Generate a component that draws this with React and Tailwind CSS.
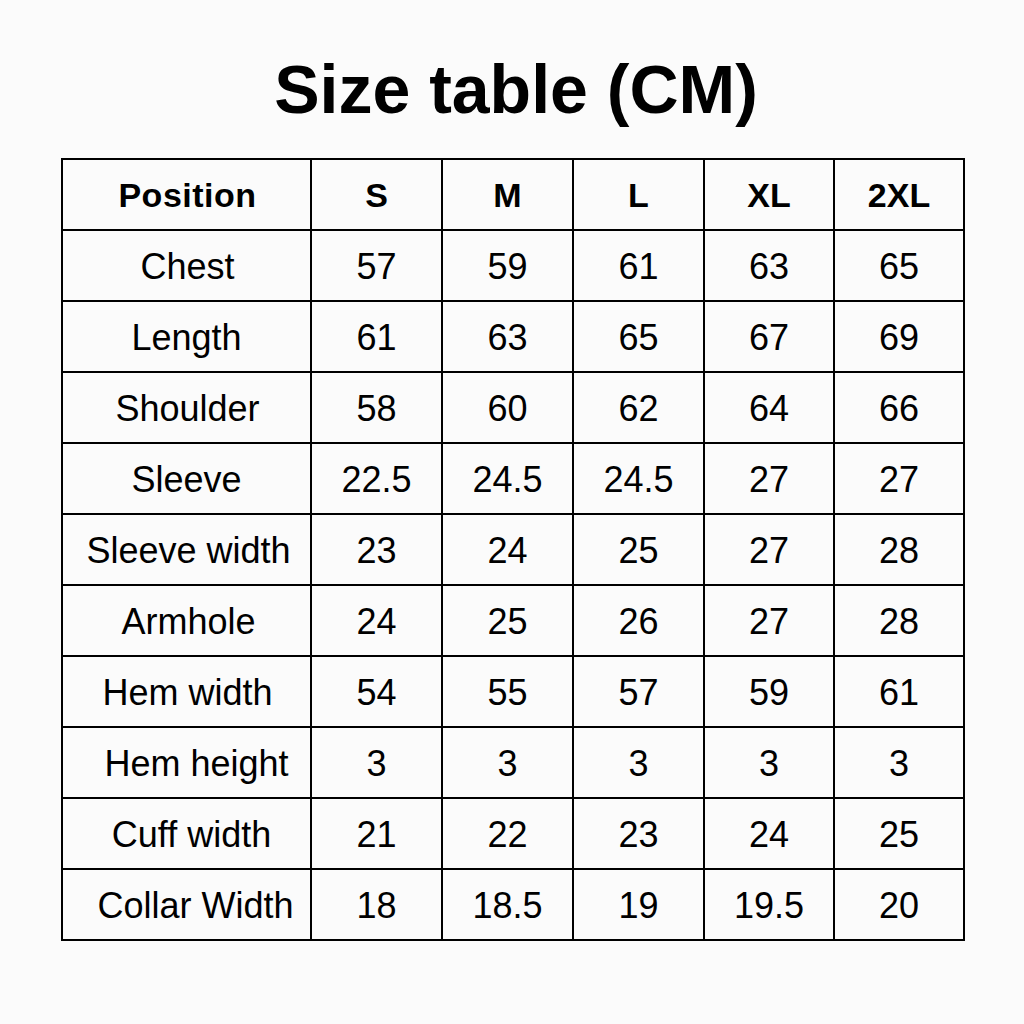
import React from 'react';

const sizes = ['S', 'M', 'L', 'XL', '2XL'];

const rows = [
  { name: 'Chest', shift: 'pl-[2px]', values: ['57', '59', '61', '63', '65'] },
  { name: 'Length', shift: '', values: ['61', '63', '65', '67', '69'] },
  { name: 'Shoulder', shift: 'pl-[2px]', values: ['58', '60', '62', '64', '66'] },
  { name: 'Sleeve', shift: '', values: ['22.5', '24.5', '24.5', '27', '27'] },
  { name: 'Sleeve width', shift: 'pl-[4px]', values: ['23', '24', '25', '27', '28'] },
  { name: 'Armhole', shift: 'pl-[4px]', values: ['24', '25', '26', '27', '28'] },
  { name: 'Hem width', shift: 'pl-[2px]', values: ['54', '55', '57', '59', '61'] },
  { name: 'Hem height', shift: 'pl-[20px]', values: ['3', '3', '3', '3', '3'] },
  { name: 'Cuff width', shift: 'pl-[10px]', values: ['21', '22', '23', '24', '25'] },
  { name: 'Collar Width', shift: 'pl-[18px]', values: ['18', '18.5', '19', '19.5', '20'] },
];

const Cell = ({ children, className = '' }) => (
  <div className={`bg-[#fbfbfb] h-[69px] pt-[2px] flex items-center justify-center ${className}`}>
    {children}
  </div>
);

const App = () => {
  return (
    <div
      className="min-h-[1024px] w-full bg-[#fbfbfb] text-black flex flex-col items-center"
      style={{ fontFamily: '"Liberation Sans", Arial, sans-serif' }}
    >
      <h1 className="pt-[55px] pl-[8px] text-[68px] leading-none font-bold">Size table (CM)</h1>

      <div className="mt-[35px] ml-[2px] grid grid-cols-[247px_129px_129px_129px_128px_128px] gap-[2px] p-[2px] bg-black">
        <Cell className="text-[34px] font-bold tracking-[0.5px] pl-[2px]">Position</Cell>
        {sizes.map((s) => (
          <Cell key={s} className="text-[34px] font-bold">{s}</Cell>
        ))}

        {rows.map((row) => (
          <React.Fragment key={row.name}>
            <Cell className={`text-[36px] ${row.shift}`}>{row.name}</Cell>
            {row.values.map((v, i) => (
              <Cell key={i} className="text-[36px]">{v}</Cell>
            ))}
          </React.Fragment>
        ))}
      </div>
    </div>
  );
};

export default App;
